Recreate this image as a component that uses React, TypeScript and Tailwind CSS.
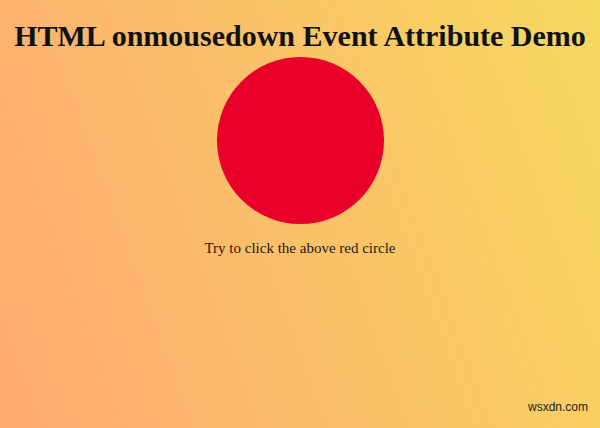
export default function App() {
  return (
    <div className="relative h-[428px] w-[600px] overflow-hidden bg-[linear-gradient(70deg,#ffa972,#f6d95f)] font-['Liberation_Serif',serif] text-black">
      <h1 className="pt-[17px] text-center text-[30px] font-bold leading-[37px] text-[#111]">
        HTML onmousedown Event Attribute Demo
      </h1>
      <div className="mx-auto mt-[3px] h-[167px] w-[167px] rounded-full bg-[#e8002b]" />
      <p className="mt-[14px] text-center text-[15px] leading-[20px] text-[#1a1a1a]">
        Try to click the above red circle
      </p>
      <span className="absolute bottom-[12px] right-[12px] font-['Liberation_Sans',sans-serif] text-[12px] text-[#222]">
        wsxdn.com
      </span>
    </div>
  )
}
